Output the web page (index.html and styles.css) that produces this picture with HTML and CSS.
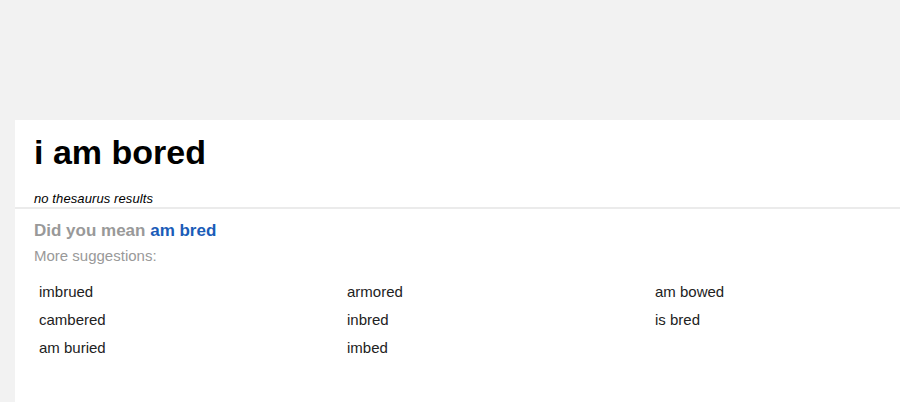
FILE: index.html
```html
<!DOCTYPE html>
<html>
<head>
<meta charset="utf-8">
<link rel="stylesheet" href="styles.css">
</head>
<body>
<div class="page">
  <div class="card">
    <div class="head">
      <h1 class="title">i am bored</h1>
      <p class="noresults">no thesaurus results</p>
    </div>
    <div class="suggest">
      <p class="didyou">Did you mean <a class="alt" href="#">am bred</a></p>
      <p class="more">More suggestions:</p>
      <ul class="words">
        <li>imbrued</li>
        <li>armored</li>
        <li>am bowed</li>
        <li>cambered</li>
        <li>inbred</li>
        <li>is bred</li>
        <li>am buried</li>
        <li>imbed</li>
      </ul>
    </div>
  </div>
</div>
</body>
</html>
```
FILE: styles.css
```css
html, body {
  margin: 0;
  padding: 0;
  background: #f2f2f2;
  overflow: hidden;
  font-family: "Liberation Sans", Arial, sans-serif;
}
.page {
  padding-top: 120px;
  padding-left: 15px;
  height: 402px;
  box-sizing: border-box;
}
.card {
  background: #fff;
  height: 282px;
}
.head {
  padding: 13px 19px 1px;
  border-bottom: 2px solid #ebebeb;
}
.title {
  margin: 0;
  font-size: 34px;
  font-weight: bold;
  color: #000;
  line-height: 39px;
}
.noresults {
  margin: 19px 0 0;
  font-size: 13px;
  font-style: italic;
  color: #000;
  line-height: 15px;
  letter-spacing: 0.1px;
}
.suggest {
  padding: 12px 0 0 19px;
}
.didyou {
  margin: 0;
  font-size: 17px;
  font-weight: bold;
  color: #999;
  line-height: 20px;
}
.alt {
  color: #1a5cb8;
  text-decoration: none;
}
.more {
  margin: 6px 0 0;
  font-size: 15px;
  color: #999;
  line-height: 17px;
}
.words {
  list-style: none;
  margin: 14px 0 0;
  padding: 0 0 0 5px;
  display: grid;
  grid-template-columns: 308px 308px 1fr;
}
.words li {
  font-size: 15px;
  line-height: 28px;
  color: #222;
}
```
